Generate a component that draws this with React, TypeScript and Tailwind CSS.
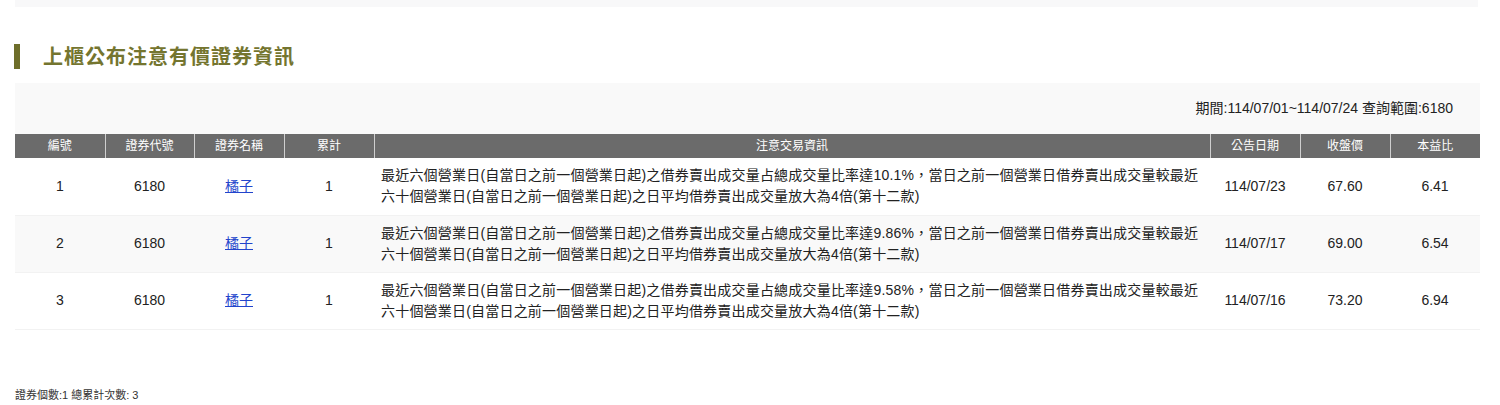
import React from "react";

const rows = [
  { no: "1", code: "6180", name: "橘子", cnt: "1", rate: "10.1%", date: "114/07/23", price: "67.60", pe: "6.41", bg: "bg-white" },
  { no: "2", code: "6180", name: "橘子", cnt: "1", rate: "9.86%", date: "114/07/17", price: "69.00", pe: "6.54", bg: "bg-[#f9f9f9]" },
  { no: "3", code: "6180", name: "橘子", cnt: "1", rate: "9.58%", date: "114/07/16", price: "73.20", pe: "6.94", bg: "bg-white" },
];

const font = { fontFamily: '"Liberation Sans", Arial, "Noto Sans CJK TC", sans-serif' };

export default function App() {
  return (
    <div className="w-[1500px] h-[405px] bg-white text-[#222]" style={font}>
      <div className="ml-[15px] mr-[22px] h-[7px] bg-[#f8f8f9]" />
      <div className="flex items-center h-[25px] mt-[37px] pl-[14px]">
        <div className="w-[6px] h-[25px] bg-[#6e6e2a]" />
        <h2 className="ml-[23px] text-[20px] font-bold tracking-[1px] text-[#74752f] leading-none">上櫃公布注意有價證券資訊</h2>
      </div>
      <div className="ml-[15px] mr-[20px] mt-[14px]">
        <div className="h-[51px] bg-[#f9f9f9] flex items-center justify-end pr-[27px] text-[14px] text-[#222]">
          期間:114/07/01~114/07/24 查詢範圍:6180
        </div>
        <table className="w-[1465px] border-collapse table-fixed">
          <colgroup>
            <col className="w-[90px]" />
            <col className="w-[89px]" />
            <col className="w-[90px]" />
            <col className="w-[90px]" />
            <col className="w-[836px]" />
            <col className="w-[90px]" />
            <col className="w-[90px]" />
            <col className="w-[90px]" />
          </colgroup>
          <thead>
            <tr className="h-[24px] bg-[#6b6b6b] text-white text-[12px]">
              {["編號", "證券代號", "證券名稱", "累計", "注意交易資訊", "公告日期", "收盤價", "本益比"].map((h, i) => (
                <th key={h} className={`font-normal text-center p-0 ${i > 0 ? "border-l border-[#cfcfcf]" : ""}`}>{h}</th>
              ))}
            </tr>
          </thead>
          <tbody className="text-[14px]">
            {rows.map((r) => (
              <tr key={r.no} className={`h-[57px] ${r.bg} border-b border-[#f2f2f2]`}>
                <td className="text-center p-0">{r.no}</td>
                <td className="text-center p-0">{r.code}</td>
                <td className="text-center p-0"><a href="#" className="text-[#2244cc] underline">{r.name}</a></td>
                <td className="text-center p-0">{r.cnt}</td>
                <td className="px-[7px] py-0 leading-[21px] tracking-[0.2px]">
                  最近六個營業日(自當日之前一個營業日起)之借券賣出成交量占總成交量比率達{r.rate}，當日之前一個營業日借券賣出成交量較最近
                  <br />
                  六十個營業日(自當日之前一個營業日起)之日平均借券賣出成交量放大為4倍(第十二款)
                </td>
                <td className="text-center p-0">{r.date}</td>
                <td className="text-center p-0">{r.price}</td>
                <td className="text-center p-0">{r.pe}</td>
              </tr>
            ))}
          </tbody>
        </table>
      </div>
      <div className="ml-[15px] mt-[57px] text-[11px] text-[#333]">證券個數:1 總累計次數: 3</div>
    </div>
  );
}
